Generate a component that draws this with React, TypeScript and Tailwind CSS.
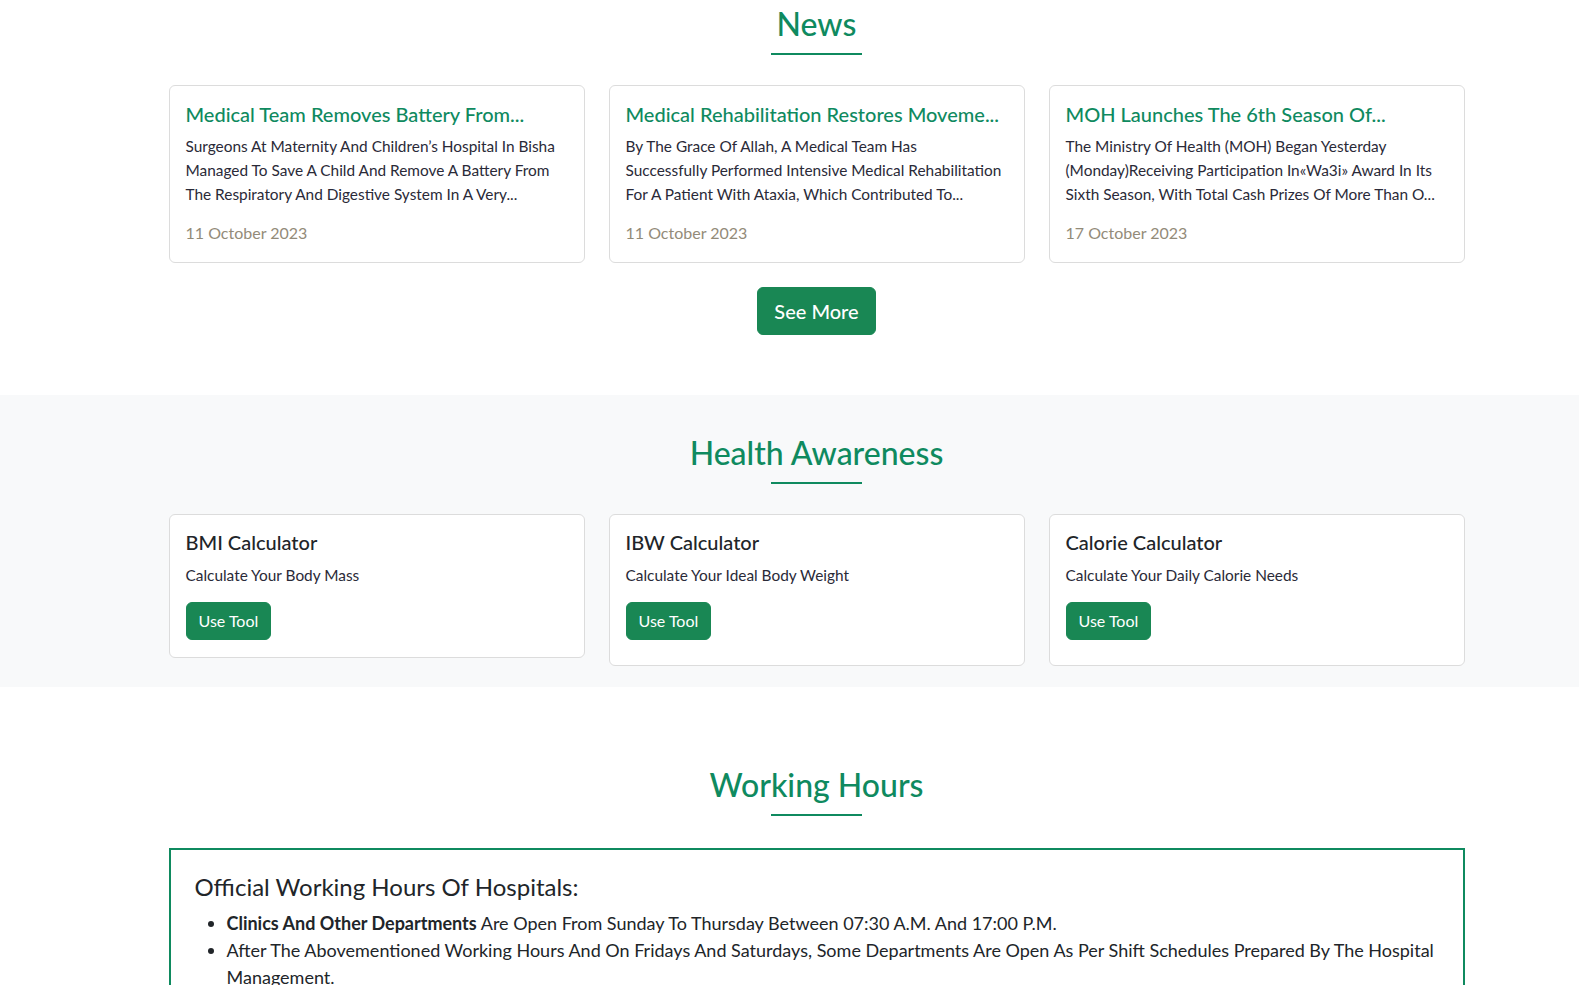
import React from 'react';

const news = [
  {
    title: 'Medical Team Removes Battery From...',
    lines: [
      'Surgeons At Maternity And Children’s Hospital In Bisha',
      'Managed To Save A Child And Remove A Battery From',
      'The Respiratory And Digestive System In A Very...',
    ],
    date: '11 October 2023',
  },
  {
    title: 'Medical Rehabilitation Restores Moveme...',
    lines: [
      'By The Grace Of Allah, A Medical Team Has',
      'Successfully Performed Intensive Medical Rehabilitation',
      'For A Patient With Ataxia, Which Contributed To...',
    ],
    date: '11 October 2023',
  },
  {
    title: 'MOH Launches The 6th Season Of...',
    lines: [
      'The Ministry Of Health (MOH) Began Yesterday',
      '(Monday)Receiving Participation In«Wa3i» Award In Its',
      'Sixth Season, With Total Cash Prizes Of More Than O...',
    ],
    date: '17 October 2023',
  },
];

const tools = [
  { name: 'BMI Calculator', desc: 'Calculate Your Body Mass', pad: 'pb-[17px]' },
  { name: 'IBW Calculator', desc: 'Calculate Your Ideal Body Weight', pad: 'pb-[25px]' },
  { name: 'Calorie Calculator', desc: 'Calculate Your Daily Calorie Needs', pad: 'pb-[25px]' },
];

const SectionTitle: React.FC<{ children: React.ReactNode }> = ({ children }) => (
  <div className="flex flex-col items-center">
    <h2 className="text-[32px] leading-[38px] font-medium text-[#0f8a5f]">{children}</h2>
    <div className="mt-[10px] h-[2px] w-[91px] bg-[#0f8a5f]" />
  </div>
);

const App: React.FC = () => {
  return (
    <div className="min-h-screen bg-white text-[#212529]" style={{ fontFamily: 'Lato, "Open Sans", sans-serif' }}>
      {/* News */}
      <section className="pt-[5px] pb-[60px]">
        <div className="pl-[54px]">
          <div className="max-w-[1296px] mx-auto">
            <SectionTitle>News</SectionTitle>
            <div className="mt-[30px] grid grid-cols-3 gap-6">
              {news.map((item) => (
                <div key={item.title} className="bg-white border border-[#dcdcdc] rounded-md px-4 pt-4 pb-[17px]">
                  <h5 className="text-[20px] leading-6 font-medium text-[#0f8a5f] whitespace-nowrap overflow-hidden">
                    {item.title}
                  </h5>
                  <div className="mt-2 text-[15.4px] leading-6 text-[#2a2a38]">
                    {item.lines.map((line) => (
                      <div key={line} className="whitespace-nowrap">{line}</div>
                    ))}
                  </div>
                  <p className="mt-[15px] text-[16px] leading-6 text-[#938b79]">{item.date}</p>
                </div>
              ))}
            </div>
            <div className="mt-6 flex justify-center">
              <button className="px-4 py-2 text-[20px] leading-[30px] font-medium text-white bg-[#198754] border border-[#198754] rounded-md">
                See More
              </button>
            </div>
          </div>
        </div>
      </section>

      {/* Health Awareness */}
      <section className="bg-[#f8f9fa] pt-[39px] pb-[21px]">
        <div className="pl-[54px]">
          <div className="max-w-[1296px] mx-auto">
            <SectionTitle>Health Awareness</SectionTitle>
            <div className="mt-[30px] grid grid-cols-3 gap-6 items-start">
              {tools.map((t) => (
                <div key={t.name} className={`bg-white border border-[#dcdcdc] rounded-md px-4 pt-[15px] ${t.pad}`}>
                  <h5 className="text-[20px] leading-6 font-medium text-[#212529]">{t.name}</h5>
                  <p className="mt-[9px] text-[15.4px] leading-6 text-[#2a2a38]">{t.desc}</p>
                  <button className="mt-[15px] px-3 py-[6px] text-[16px] leading-6 text-white bg-[#198754] border border-[#198754] rounded-md">
                    Use Tool
                  </button>
                </div>
              ))}
            </div>
          </div>
        </div>
      </section>

      {/* Working Hours */}
      <section className="pt-[79px] pb-10">
        <div className="pl-[54px]">
          <div className="max-w-[1296px] mx-auto">
            <SectionTitle>Working Hours</SectionTitle>
            <div className="mt-[32px] border-2 border-[#0f8a5f] px-6 pt-[22px] pb-6">
              <h4 className="text-[24px] leading-[29px] text-[#212529]">Official Working Hours Of Hospitals:</h4>
              <ul className="mt-[9px] list-disc pl-8 text-[18px] leading-[27px] text-[#212529]">
                <li>
                  <strong className="font-bold">Clinics And Other Departments</strong> Are Open From Sunday To Thursday Between 07:30 A.M. And 17:00 P.M.
                </li>
                <li>
                  After The Abovementioned Working Hours And On Fridays And Saturdays, Some Departments Are Open As Per Shift Schedules Prepared By The Hospital Management.
                </li>
                <li>Emergency Departments Are Open 24 Hours A Day, 7 Days A Week.</li>
              </ul>
            </div>
          </div>
        </div>
      </section>
    </div>
  );
};

export default App;
